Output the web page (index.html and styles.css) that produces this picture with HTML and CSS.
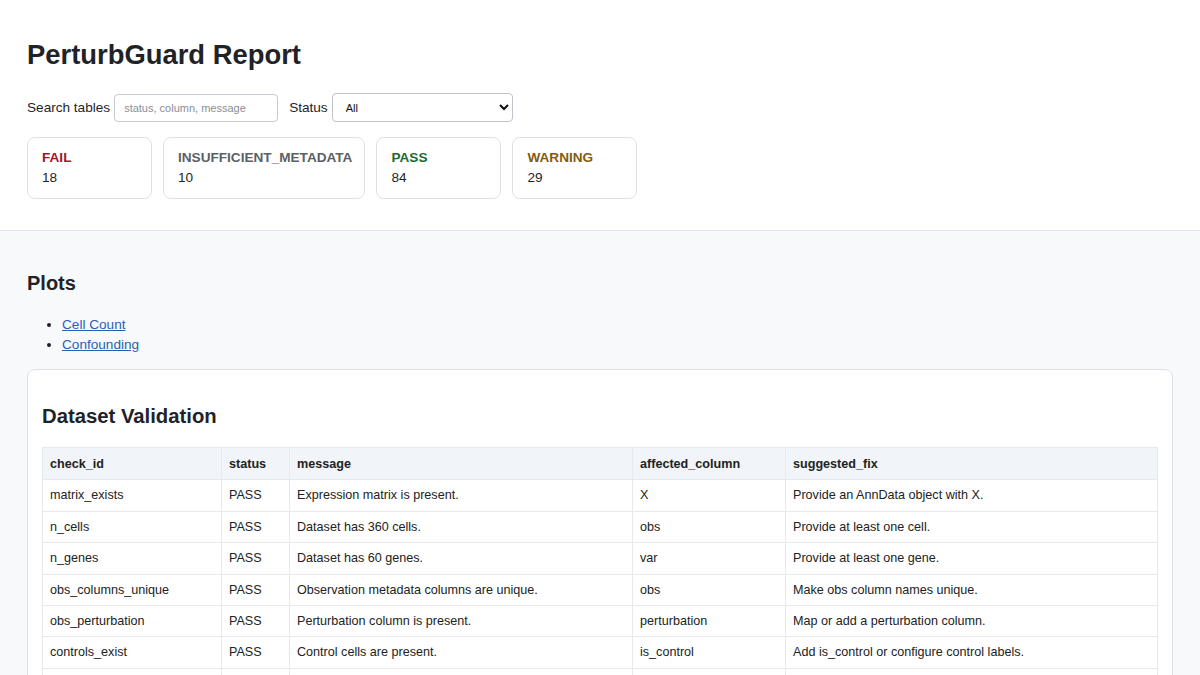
FILE: index.html
```html
<!DOCTYPE html>
<html lang="en">
<head>
    <meta charset="utf-8" />
    <title>PerturbGuard Report</title>
    <link rel="stylesheet" href="styles.css">
</head>
<body>
<header class="top">
    <h1>PerturbGuard Report</h1>
    <div class="filters">
        <label for="search">Search tables</label>
        <input id="search" type="text" placeholder="status, column, message" />
        <label for="status">Status</label>
        <select id="status">
            <option>All</option>
            <option>FAIL</option>
            <option>INSUFFICIENT_METADATA</option>
            <option>PASS</option>
            <option>WARNING</option>
        </select>
    </div>
    <div class="summary">
        <div class="card"><div class="label fail">FAIL</div><div class="count">18</div></div>
        <div class="card"><div class="label meta">INSUFFICIENT_METADATA</div><div class="count">10</div></div>
        <div class="card"><div class="label pass">PASS</div><div class="count">84</div></div>
        <div class="card"><div class="label warn">WARNING</div><div class="count">29</div></div>
    </div>
</header>

<main class="content">
    <h2>Plots</h2>
    <ul class="plots">
        <li><a href="#cell-count">Cell Count</a></li>
        <li><a href="#confounding">Confounding</a></li>
    </ul>

    <section class="panel">
        <h2>Dataset Validation</h2>
        <table class="results">
            <colgroup>
                <col class="c-id" />
                <col class="c-status" />
                <col class="c-msg" />
                <col class="c-col" />
                <col class="c-fix" />
            </colgroup>
            <thead>
                <tr><th>check_id</th><th>status</th><th>message</th><th>affected_column</th><th>suggested_fix</th></tr>
            </thead>
            <tbody>
                <tr><td>matrix_exists</td><td>PASS</td><td>Expression matrix is present.</td><td>X</td><td>Provide an AnnData object with X.</td></tr>
                <tr><td>n_cells</td><td>PASS</td><td>Dataset has 360 cells.</td><td>obs</td><td>Provide at least one cell.</td></tr>
                <tr><td>n_genes</td><td>PASS</td><td>Dataset has 60 genes.</td><td>var</td><td>Provide at least one gene.</td></tr>
                <tr><td>obs_columns_unique</td><td>PASS</td><td>Observation metadata columns are unique.</td><td>obs</td><td>Make obs column names unique.</td></tr>
                <tr><td>obs_perturbation</td><td>PASS</td><td>Perturbation column is present.</td><td>perturbation</td><td>Map or add a perturbation column.</td></tr>
                <tr><td>controls_exist</td><td>PASS</td><td>Control cells are present.</td><td>is_control</td><td>Add is_control or configure control labels.</td></tr>
                <tr><td>obs_batch</td><td>PASS</td><td>Batch column is present.</td><td>batch</td><td>Map or add a batch column.</td></tr>
                <tr><td>obs_sample</td><td>PASS</td><td>Sample column is present.</td><td>sample</td><td>Map or add a sample column.</td></tr>
            </tbody>
        </table>
    </section>
</main>
</body>
</html>
```

FILE: styles.css
```css
* {
    box-sizing: border-box;
}

body {
    margin: 0;
    font-family: "Liberation Sans", Arial, sans-serif;
    color: #1f2328;
    background: #f8f9fb;
}

.top {
    padding: 39px 27px 31px;
    background: #fff;
    border-bottom: 1px solid #e3e6ea;
}

.top h1 {
    margin: 0;
    font-size: 27.4px;
    line-height: 32px;
}

.filters {
    display: flex;
    align-items: center;
    margin-top: 22px;
    font-size: 13.6px;
}

.filters label {
    margin-right: 4px;
}

.filters input {
    width: 164px;
    height: 28px;
    margin-right: 11px;
    padding: 0 9px;
    border: 1px solid #c7cbd1;
    border-radius: 4px;
    font-family: inherit;
    font-size: 11px;
}

.filters input::placeholder {
    color: #8a8f96;
}

.filters select {
    width: 181px;
    height: 29px;
    padding: 0 9px;
    border: 1px solid #bfc4ca;
    border-radius: 4px;
    background: #fff;
    font-family: inherit;
    font-size: 11px;
    color: #111;
}

.summary {
    display: flex;
    gap: 11px;
    margin-top: 15px;
}

.card {
    min-width: 125px;
    height: 62px;
    padding: 12px 12px 12px 14px;
    border: 1px solid #dde1e6;
    border-radius: 8px;
    background: #fff;
}

.card .label {
    font-size: 13.6px;
    font-weight: bold;
    line-height: 16px;
}

.card .count {
    margin-top: 4px;
    font-size: 13.6px;
    line-height: 16px;
}

.fail { color: #a51326; }
.meta { color: #5b5f66; }
.pass { color: #1d6b32; }
.warn { color: #845b10; }

.content {
    padding: 40px 27px 28px;
}

.content > h2 {
    margin: 0;
    font-size: 20px;
    line-height: 24px;
}

.plots {
    margin: 20px 0 14px;
    padding-left: 35px;
    font-size: 13.6px;
    line-height: 20px;
}

.plots a {
    color: #2a5fb8;
}

.panel {
    padding: 34px 14px 14px;
    border: 1px solid #dde1e6;
    border-radius: 8px;
    background: #fff;
}

.panel h2 {
    margin: 0 0 19px;
    font-size: 20.3px;
    line-height: 24px;
}

.results {
    width: 100%;
    border-collapse: collapse;
    table-layout: fixed;
    border: 1px solid #e3e6ea;
    font-size: 12.6px;
    color: #222;
}

.c-id { width: 179px; }
.c-status { width: 68px; }
.c-msg { width: 343px; }
.c-col { width: 153px; }

.results th,
.results td {
    padding: 8px 7px;
    border: 1px solid #e6e9ed;
    text-align: left;
    line-height: 14.4px;
    white-space: nowrap;
    overflow: hidden;
}

.results th {
    padding-top: 9px;
    background: #f1f4f8;
    font-weight: bold;
}
```
